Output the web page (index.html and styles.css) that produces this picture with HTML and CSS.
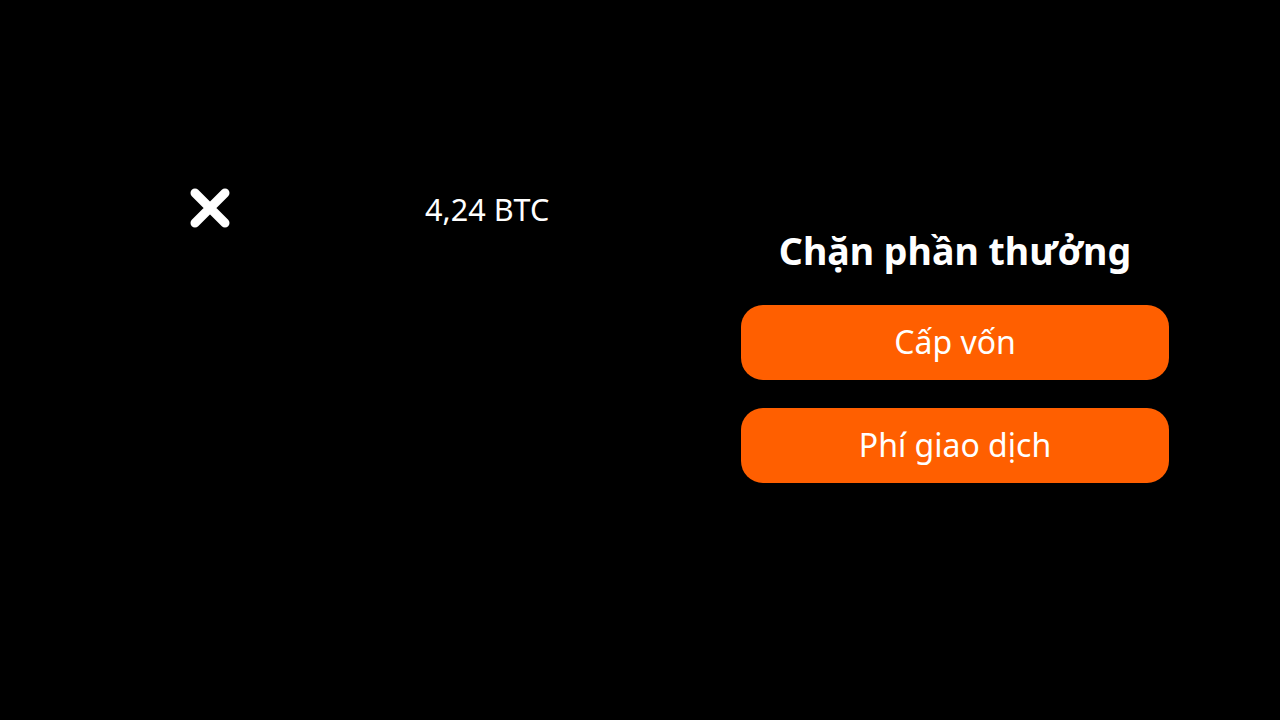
FILE: index.html
```html
<!DOCTYPE html>
<html lang="vi">
<head>
<meta charset="utf-8">
<link rel="stylesheet" href="styles.css">
</head>
<body>
<div class="screen">
  <div class="left">
    <button class="close" aria-label="Đóng">
      <svg width="42" height="42" viewBox="0 0 42 42"><path d="M6 6 L36 36 M36 6 L6 36" stroke="#fff" stroke-width="9" stroke-linecap="round" fill="none"/></svg>
    </button>
    <div class="amount">4,24 BTC</div>
  </div>
  <div class="right">
    <h1 class="title">Chặn phần thưởng</h1>
    <button class="btn">Cấp vốn</button>
    <button class="btn">Phí giao dịch</button>
  </div>
</div>
</body>
</html>
```
FILE: styles.css
```css
html, body {
  margin: 0;
  padding: 0;
  background: #000;
  width: 1280px;
  height: 720px;
  overflow: hidden;
  font-family: "Noto Sans", "Open Sans", sans-serif;
  color: #fff;
}
.screen {
  display: flex;
  flex-direction: row;
  padding-top: 186px;
  padding-left: 189px;
}
.left {
  display: flex;
  align-items: center;
  width: 552px;
  height: 44px;
}
.close {
  background: none;
  border: none;
  padding: 0;
  width: 42px;
  height: 42px;
  display: flex;
}
.amount {
  font-size: 30.6px;
  margin-left: 194px;
  line-height: 44px;
  padding-top: 2px;
}
.right {
  width: 428px;
  display: flex;
  flex-direction: column;
  align-items: stretch;
  padding-top: 40px;
}
.title {
  margin: 0 0 29px 0;
  font-size: 37.5px;
  font-weight: 700;
  text-align: center;
  line-height: 50px;
}
.btn {
  height: 75px;
  border: none;
  border-radius: 22px;
  background: #ff5f00;
  color: #fff;
  font-family: "Noto Sans", "Open Sans", sans-serif;
  font-size: 32px;
  margin-bottom: 28px;
  padding: 0 0 2px 0;
}
```
